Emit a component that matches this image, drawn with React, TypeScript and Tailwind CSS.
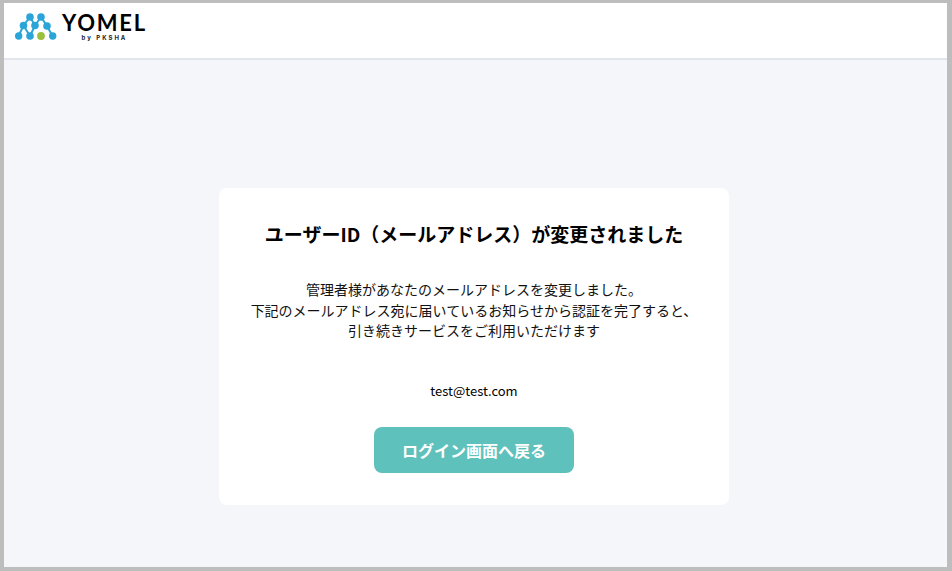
const jp = '"Noto Sans CJK JP", "Noto Sans", sans-serif';

function Logo() {
  const blue = '#2ba5d8';
  return (
    <div className="flex items-start">
      <svg width="42" height="28" viewBox="0 0 42 28" className="mt-[10px] ml-[11px]">
        <g stroke={blue} strokeWidth="2" fill="none">
          <path d="M3.5 23 L8.5 12.5 L15 4 L20 12.5 L26 4 L32 13 L37.5 23" />
          <path d="M8.5 12.5 L15 23 M20 12.5 L15 23" />
        </g>
        <g fill={blue}>
          <circle cx="15" cy="4" r="3.8" />
          <circle cx="26" cy="4" r="3.8" />
          <circle cx="8.5" cy="12.5" r="3.8" />
          <circle cx="20" cy="12.5" r="3.8" />
          <circle cx="32" cy="13" r="3.8" />
          <circle cx="3.7" cy="23" r="3.7" />
          <circle cx="15" cy="23" r="3.8" />
          <circle cx="37.7" cy="23" r="3.7" />
        </g>
        <circle cx="26" cy="23" r="3.9" fill="#9bc13c" />
      </svg>
      <div className="ml-[5px] mt-[8px] flex flex-col items-center">
        <span className="text-[22px] leading-[24px] font-bold tracking-[1.8px] text-black font-['Lato',sans-serif]">YOMEL</span>
        <span className="text-[6px] leading-[6px] font-bold tracking-[2px] text-[#222] font-['Inter',sans-serif]">by PKSHA</span>
      </div>
    </div>
  );
}

export default function App() {
  return (
    <div className="h-[571px] w-[952px] overflow-hidden bg-[#bdbdbd] pt-[3px] pr-[5px] pb-[4px] pl-[4px]">
      <div className="flex h-full flex-col bg-[#f4f6fa]">
        <header className="h-[57px] shrink-0 border-b-2 border-[#e3e5ec] bg-white">
          <Logo />
        </header>
        <main className="flex flex-1 justify-center pt-[128px] pr-[3px]">
          <div className="flex h-[317px] w-[510px] flex-col items-center rounded-lg bg-white pt-[31px]" style={{ fontFamily: jp }}>
            <h1 className="text-[19px] leading-[30px] font-bold text-black">ユーザーID（メールアドレス）が変更されました</h1>
            <p className="mt-[30px] text-center text-[14px] leading-[20.5px] text-[#111]">
              管理者様があなたのメールアドレスを変更しました。
              <br />
              下記のメールアドレス宛に届いているお知らせから認証を完了すると、
              <br />
              引き続きサービスをご利用いただけます
            </p>
            <p className="mt-[38px] text-[13px] leading-[24px] text-black">test@test.com</p>
            <button className="mt-[24px] flex h-[46px] w-[200px] items-center justify-center rounded-lg bg-[#5fc1bb] text-[16px] font-bold text-white">
              ログイン画面へ戻る
            </button>
          </div>
        </main>
      </div>
    </div>
  );
}
